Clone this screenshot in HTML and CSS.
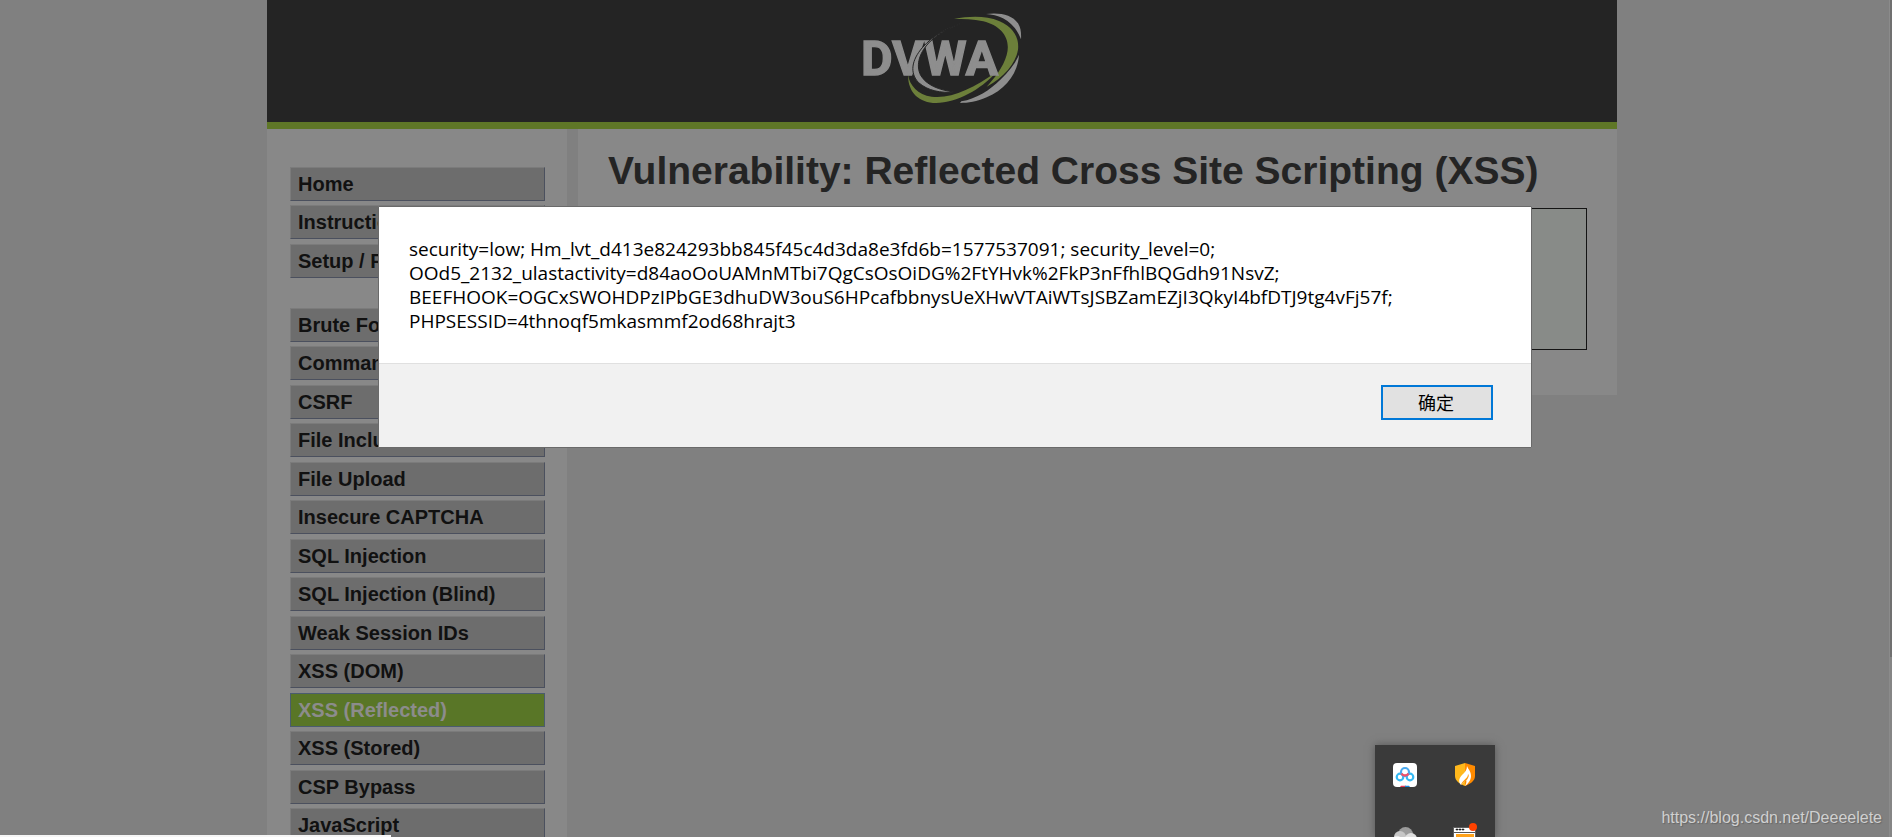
FILE: index.html
```html
<!DOCTYPE html>
<html lang="en">
<head>
<meta charset="utf-8">
<title>Vulnerability: Reflected Cross Site Scripting (XSS)</title>
<link rel="stylesheet" href="styles.css">
</head>
<body>
<div class="container">
  <header class="header">
    <svg class="logo" viewBox="69 36 477 276" role="img" aria-label="DVWA">
      <path fill="#8e8e8e" d="M438 42C480 37 516 44 534 70C543 84 544 101 543 118C532 88 514 69 489 55C472 46 457 43 438 42Z"/>
      <path fill="#8e8e8e" d="M537 164C534 220 496 269 440 292C410 305 385 309 360 309L364 304C410 296 450 270 481 239C508 213 526 190 537 164Z"/>
      <path fill="#6c7f3a" d="M342 57C390 47 440 47 477 63C520 82 538 112 534 149C527 190 492 232 440 260C462 236 490 202 500 165C514 116 484 77 430 64C400 57 370 57 342 57Z"/>
      <path fill="#6c7f3a" d="M204 224C209 256 233 284 275 290C335 297 398 265 470 216C420 270 352 308 288 309C238 308 204 279 204 224Z"/>
      <text class="logo-text" x="63" y="225">DVWA</text>
      <path fill="#8e8e8e" stroke="#242424" stroke-width="3" d="M376 66C325 82 280 105 247 143C215 180 208 219 236 248C263 272 303 280 342 276C296 270 259 255 242 226C226 194 239 155 272 123C301 96 337 80 376 66Z"/>
    </svg>
  </header>
  <div class="columns">
    <nav class="sidebar">
      <ul class="menu">
        <li><a href="#">Home</a></li>
        <li><a href="#">Instructions</a></li>
        <li><a href="#">Setup / Reset DB</a></li>
      </ul>
      <ul class="menu">
        <li><a href="#">Brute Force</a></li>
        <li><a href="#">Command Injection</a></li>
        <li><a href="#">CSRF</a></li>
        <li><a href="#">File Inclusion</a></li>
        <li><a href="#">File Upload</a></li>
        <li><a href="#">Insecure CAPTCHA</a></li>
        <li><a href="#">SQL Injection</a></li>
        <li><a href="#">SQL Injection (Blind)</a></li>
        <li><a href="#">Weak Session IDs</a></li>
        <li><a href="#">XSS (DOM)</a></li>
        <li><a href="#" class="selected">XSS (Reflected)</a></li>
        <li><a href="#">XSS (Stored)</a></li>
        <li><a href="#">CSP Bypass</a></li>
        <li><a href="#">JavaScript</a></li>
      </ul>
    </nav>
    <main class="content">
      <h1>Vulnerability: Reflected Cross Site Scripting (XSS)</h1>
      <div class="vulnerable"></div>
    </main>
  </div>
</div>

<div class="scrollbar"><div class="thumb"></div></div>
<div class="status"></div>

<div class="dialog" role="alertdialog" aria-modal="true" aria-describedby="message">
  <p class="message" id="message">security=low; Hm_lvt_d413e824293bb845f45c4d3da8e3fd6b=1577537091; security_level=0;<br>OOd5_2132_ulastactivity=d84aoOoUAMnMTbi7QgCsOsOiDG%2FtYHvk%2FkP3nFfhlBQGdh91NsvZ;<br>BEEFHOOK=OGCxSWOHDPzIPbGE3dhuDW3ouS6HPcafbbnysUeXHwVTAiWTsJSBZamEZjI3QkyI4bfDTJ9tg4vFj57f;<br>PHPSESSID=4thnoqf5mkasmmf2od68hrajt3</p>
  <div class="actions"><button type="button" lang="zh">确定</button></div>
</div>

<div class="tray">
  <svg viewBox="0 0 24 24" aria-hidden="true">
    <rect width="24" height="24" rx="4" fill="#fff"/>
    <circle cx="7" cy="14" r="3.3" fill="none" stroke="#35b9f3" stroke-width="2.2"/>
    <circle cx="17" cy="14" r="3.3" fill="none" stroke="#35b9f3" stroke-width="2.2"/>
    <circle cx="12" cy="9" r="4" fill="none" stroke="#4aa9ee" stroke-width="2.2"/>
    <path d="M8.5 10.5a4 4 0 0 0 7 0" fill="none" stroke="#f0526b" stroke-width="2.4"/>
    <path d="M7 24l1-1.200h5V24z" fill="#ec3a55"/><path d="M12 24v-1.200h4l1 1.200z" fill="#1688dc"/>
  </svg>
  <svg viewBox="0 0 24 24" aria-hidden="true">
    <path d="M12 0L2 3v10c0 5 5 8 10 10z" fill="#ffb81c"/>
    <path d="M12 0l10 3v10c0 5-5 8-10 10z" fill="#ff8a00"/>
    <path d="M14 3c1 3 4 5 4 10c0 4-3 8-6 10c1-2 2-4 1-6c-1 2-4 3-5 5c-3-3-2-7 1-10c3-3 5-5 5-9z" fill="#fff"/>
    <path d="M15 11c0 5-6 6-7 11c2-3 6-4 7-7c1-2 1-3 0-4z" fill="#ff9c10"/>
  </svg>
  <svg viewBox="0 0 24 24" aria-hidden="true">
    <circle cx="12.500" cy="7.500" r="7.500" fill="#9b9b9b"/>
    <circle cx="7" cy="10" r="6" fill="#c6c6c6"/>
    <circle cx="18" cy="12" r="6" fill="#dedede"/>
    <path d="M0 13c0-5 6-6 9-1c3-4 13-3 15 3v9H0z" fill="#e4e4e4"/>
  </svg>
  <svg viewBox="0 0 24 24" aria-hidden="true">
    <path d="M0 0h23v24H0z" fill="#5d5d5d"/>
    <path d="M1 1h21v23H1z" fill="#fff"/>
    <path d="M3 2h2v1H3zM6 2h2v1H6zM9 2h2v1H9z" fill="#222" stroke="#222" stroke-width=".6"/>
    <path d="M1 5h21v1H1z" fill="#555"/><path d="M3 7h18v17H3z" fill="#ffa21a"/>
    <circle cx="20" cy="0" r="4" fill="#ff4200"/>
  </svg>
</div>
<div class="watermark">https://blog.csdn.net/Deeeelete</div>
</body>
</html>
```
FILE: styles.css
```css
* { box-sizing: border-box; }
body {
  margin: 0;
  height: 100vh;
  overflow: hidden;
  padding-right: 8px;
  background: #808080;
  font-family: "Liberation Sans", Arial, sans-serif;
}
.container { max-width: 1350px; margin: 0 auto; }
.header {
  display: flex;
  justify-content: center;
  padding: 12px 0 18px;
  background: #242424;
  border-bottom: 7px solid #5f7727;
}
.logo { width: 159px; height: 92px; overflow: visible; }
.logo-text {
  font: 700 146px Roboto, sans-serif;
  fill: #8e8e8e;
  stroke: #8e8e8e;
  stroke-width: 4px;
}
.columns { display: flex; align-items: flex-start; gap: 11px; }
.sidebar {
  flex: 0 0 300px;
  min-height: calc(100vh - 129px);
  padding: 38px 22px 0 23px;
  background: #888888;
}
.menu { list-style: none; margin: 0 0 30px; padding: 0; }
.menu li { margin-bottom: 5px; }
.menu li:nth-child(odd) { margin-bottom: 4px; }
.menu a {
  display: block;
  height: 34px;
  padding-left: 7px;
  border: 1px solid #4b505e;
  border-top-color: #7b7b7b;
  border-left-color: #7b7b7b;
  background: #6d6d6d;
  color: #111111;
  font-size: 20px;
  font-weight: 700;
  line-height: 32px;
  text-decoration: none;
}
.menu .selected { background: #597627; border-color: #4b5c6e; color: #8c8c8c; }
.content { flex: 1; padding: 19px 30px 45px; background: #888888; }
h1 { margin: 0 0 14px; font-size: 39px; line-height: 46px; color: #242424; }
.vulnerable { height: 142px; border: 1px solid #141414; background: #888b88; }
.scrollbar {
  position: absolute;
  top: 0; right: 0; bottom: 0;
  width: 3px;
  border-left: 1px solid #8b8b8b;
  background: #858585;
}
.thumb { height: 657px; background: #707070; }
.status { position: absolute; left: 0; bottom: 0; width: 391px; height: 2px; background: #f6f6f6; }
.dialog {
  position: absolute;
  top: 206px; left: 378px; right: 360px;
  border: 1px solid #6a6a6a;
  border-radius: 1px;
  background: #ffffff;
}
.message {
  margin: 0;
  padding: 30px 30px 30px;
  color: #000000;
  font: 19px/24px "Open Sans", "Noto Sans", sans-serif;
}
.actions {
  display: flex;
  justify-content: flex-end;
  padding: 21px 38px 27px;
  border-top: 1px solid #e0e0e0;
  background: #f1f1f1;
}
.actions button {
  width: 112px;
  height: 35px;
  padding: 0 2px 2px 0;
  border: 2px solid #0078d7;
  background: #e1e1e1;
  color: #000000;
  font: 18px/24px "Noto Sans CJK SC", sans-serif;
}
.tray {
  position: absolute;
  left: 1375px; bottom: 0;
  width: 120px;
  height: 92px;
  padding: 18px 18px 0;
  display: grid;
  grid-template-columns: 24px 24px;
  column-gap: 36px;
  row-gap: 40px;
  overflow: hidden;
  background: #3a3a3a;
  box-shadow: 0 0 8px #555555;
}
.tray svg { width: 24px; height: 24px; overflow: visible; }
.watermark {
  position: absolute;
  right: 10px; bottom: 9px;
  color: #d0d0d0;
  font-size: 16px;
  line-height: 20px;
  text-shadow: 1px 1px 1px #666666;
}
```
